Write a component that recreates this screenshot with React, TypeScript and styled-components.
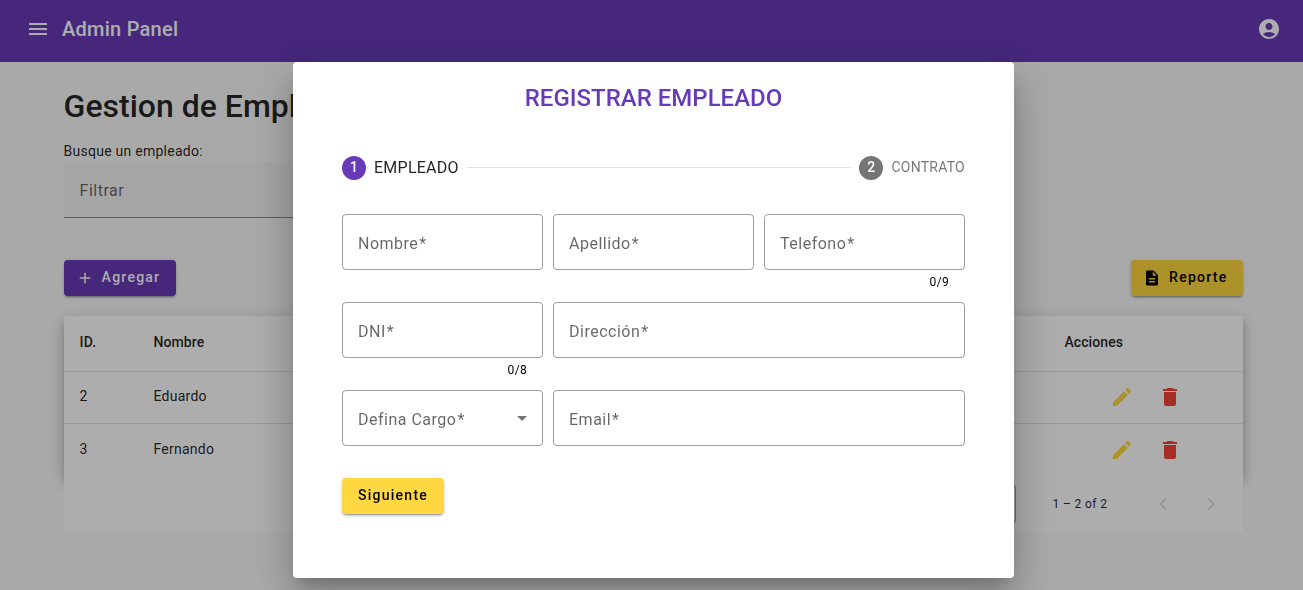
import React from "react";
import styled, { createGlobalStyle } from "styled-components";
import {
  MdMenu,
  MdAccountCircle,
  MdAdd,
  MdDescription,
  MdEdit,
  MdDelete,
  MdChevronLeft,
  MdChevronRight,
} from "react-icons/md";

const GlobalStyle = createGlobalStyle`
  * { box-sizing: border-box; }
  html, body { margin: 0; height: 100%; overflow: hidden; }
  body {
    background: #fafafa;
    color: rgba(0, 0, 0, 0.87);
    font-family: Roboto, "Liberation Sans", sans-serif;
    font-size: 14px;
  }
  svg { display: block; flex: none; }
`;

const Toolbar = styled.header`
  display: flex;
  align-items: center;
  justify-content: space-between;
  height: 62px;
  padding: 0 22px 4px 26px;
  background: #673ab7;
  color: #fff;
`;

const Brand = styled.div`
  display: flex;
  align-items: center;
  gap: 12px;
  font-size: 20px;
  font-weight: 500;
  line-height: 32px;
  letter-spacing: 0.25px;
`;

const Page = styled.main`
  display: flex;
  flex-direction: column;
  padding: 24px 59.6px 0 63.6px;
`;

const Heading = styled.h1`
  margin: 0;
  font-size: 32px;
  font-weight: 500;
  line-height: 40px;
  white-space: nowrap;
`;

const FilterLabel = styled.label`
  margin-top: 15px;
  line-height: 20px;
  letter-spacing: 0.25px;
`;

const FilterField = styled.div`
  display: flex;
  align-items: center;
  width: 500px;
  height: 56px;
  margin-top: 1px;
  padding: 2px 16px 0;
  border-radius: 4px 4px 0 0;
  border-bottom: 1px solid rgba(0, 0, 0, 0.42);
  background: #f5f5f5;
  color: rgba(0, 0, 0, 0.6);
  font-size: 16px;
  letter-spacing: 0.5px;
`;

const Actions = styled.div`
  display: flex;
  justify-content: space-between;
  margin-top: 42px;
`;

const Button = styled.button<{ $tone: "primary" | "accent"; $icon?: boolean }>`
  display: inline-flex;
  align-items: center;
  gap: 8px;
  height: 36px;
  padding: 0 16px 0 ${(p) => (p.$icon ? 12 : 16)}px;
  border: 0;
  border-radius: 4px;
  background: ${(p) => (p.$tone === "primary" ? "#673ab7" : "#ffd740")};
  color: ${(p) => (p.$tone === "primary" ? "#fff" : "#000")};
  font: 500 14px/34px Roboto, "Liberation Sans", sans-serif;
  letter-spacing: 1.25px;
  box-shadow: 0 3px 1px -2px rgba(0, 0, 0, 0.2), 0 2px 2px 0 rgba(0, 0, 0, 0.14),
    0 1px 5px 0 rgba(0, 0, 0, 0.12);
`;

const ButtonText = styled.span`
  padding-bottom: 2px;
`;

const TableCard = styled.section`
  margin-top: 20px;
  background: #fff;
  box-shadow: 0 5px 5px -3px rgba(0, 0, 0, 0.2), 0 8px 10px 1px rgba(0, 0, 0, 0.14),
    0 3px 14px 2px rgba(0, 0, 0, 0.12);
`;

const Row = styled.div<{ $head?: boolean; $last?: boolean }>`
  display: grid;
  grid-template-columns: 73.9px 1fr 179px;
  align-items: center;
  height: ${(p) => (p.$head ? 56 : 52)}px;
  padding: 0 0 ${(p) => (p.$head ? 3 : p.$last ? 2 : 4)}px 16px;
  border-bottom: ${(p) => (p.$last ? "0" : "1px solid rgba(0, 0, 0, 0.12)")};
  font-weight: ${(p) => (p.$head ? 500 : 400)};
  letter-spacing: ${(p) => (p.$head ? 0.1 : 0.25)}px;
`;

const RowActions = styled.div`
  display: flex;
  gap: 24px;
  padding: 2px 0 0 45.6px;
`;

const Paginator = styled.footer`
  position: relative;
  display: flex;
  align-items: center;
  justify-content: flex-end;
  height: 56px;
  padding-right: 8px;
  background: #fff;
  color: rgba(0, 0, 0, 0.87);
  font-size: 12px;
  letter-spacing: 0.4px;
`;

const PageSize = styled.div`
  width: 84px;
  height: 40px;
  padding: 12px 16px;
  border: 1px solid rgba(0, 0, 0, 0.38);
  border-radius: 4px;
`;

const Range = styled.div`
  width: 55px;
  margin: 0 32px 0 36px;
  white-space: nowrap;
`;

const PageButton = styled.button`
  display: grid;
  place-items: center;
  width: 48px;
  height: 48px;
  padding: 0;
  border: 0;
  background: none;
  color: rgba(0, 0, 0, 0.12);
`;

const Backdrop = styled.div`
  position: fixed;
  inset: 0;
  display: flex;
  justify-content: center;
  align-items: flex-start;
  padding: 62px 0 0 4px;
  background: rgba(0, 0, 0, 0.32);
`;

const Dialog = styled.section`
  width: 721px;
  height: 516px;
  padding: 20px 49px 0;
  border-radius: 4px;
  background: #fff;
  box-shadow: 0 11px 15px -7px rgba(0, 0, 0, 0.2), 0 24px 38px 3px rgba(0, 0, 0, 0.14),
    0 9px 46px 8px rgba(0, 0, 0, 0.12);
`;

const DialogTitle = styled.h2`
  margin: 0;
  color: #673ab7;
  font-size: 24px;
  font-weight: 500;
  line-height: 32px;
  text-align: center;
`;

const Stepper = styled.div`
  display: flex;
  align-items: center;
  gap: 8px;
  height: 24px;
  margin-top: 42px;
`;

const Step = styled.div<{ $active?: boolean }>`
  display: flex;
  align-items: center;
  gap: 8px;
  color: ${(p) => (p.$active ? "rgba(0, 0, 0, 0.87)" : "rgba(0, 0, 0, 0.54)")};
  font-size: ${(p) => (p.$active ? 16 : 14)}px;
  line-height: 22px;
  letter-spacing: 0.25px;
`;

const StepLabel = styled.span<{ $active?: boolean }>`
  padding-bottom: ${(p) => (p.$active ? 0 : 2)}px;
`;

const StepNumber = styled.span<{ $active?: boolean }>`
  display: grid;
  place-items: center;
  width: 24px;
  height: 24px;
  padding-bottom: 2px;
  border-radius: 50%;
  background: ${(p) => (p.$active ? "#673ab7" : "#757575")};
  color: #fff;
  font-size: 14px;
  font-weight: 500;
`;

const StepLine = styled.div`
  flex: 1;
  height: 1px;
  margin-bottom: 1px;
  background: rgba(0, 0, 0, 0.12);
`;

const Form = styled.form`
  display: grid;
  grid-template-columns: repeat(3, 1fr);
  grid-auto-rows: 88px;
  column-gap: 10px;
  margin-top: 34px;
`;

const Field = styled.div<{ $wide?: boolean }>`
  grid-column: span ${(p) => (p.$wide ? 2 : 1)};
`;

const FieldBox = styled.div`
  display: flex;
  align-items: center;
  justify-content: space-between;
  height: 56px;
  padding: 2px 15px 0;
  border: 1px solid rgba(0, 0, 0, 0.38);
  border-radius: 4px;
  color: rgba(0, 0, 0, 0.6);
  font-size: 16px;
  letter-spacing: 0.5px;
`;

const Required = styled.span`
  margin-left: 1px;
`;

const Counter = styled.div`
  padding: 2px 15.8px 0;
  color: #000;
  font-size: 12px;
  line-height: 20px;
  letter-spacing: 0.4px;
  text-align: right;
`;

const Caret = styled.span`
  margin: -2px 0 0;
  border: 5px solid transparent;
  border-top-color: rgba(0, 0, 0, 0.54);
  border-bottom: 0;
`;

const employees = [
  { id: 2, name: "Eduardo" },
  { id: 3, name: "Fernando" },
];

type FieldSpec = { label: string; wide?: boolean; max?: number; select?: boolean };

const fields: FieldSpec[] = [
  { label: "Nombre" },
  { label: "Apellido" },
  { label: "Telefono", max: 9 },
  { label: "DNI", max: 8 },
  { label: "Dirección", wide: true },
  { label: "Defina Cargo", select: true },
  { label: "Email", wide: true },
];

export default function App() {
  return (
    <>
      <GlobalStyle />
      <Toolbar>
        <Brand>
          <MdMenu size={24} />
          Admin Panel
        </Brand>
        <MdAccountCircle size={24} />
      </Toolbar>

      <Page>
        <Heading>Gestion de Empleados</Heading>
        <FilterLabel>Busque un empleado:</FilterLabel>
        <FilterField>Filtrar</FilterField>
        <Actions>
          <Button $tone="primary" $icon>
            <MdAdd size={18} />
            <ButtonText>Agregar</ButtonText>
          </Button>
          <Button $tone="accent" $icon>
            <MdDescription size={18} />
            <ButtonText>Reporte</ButtonText>
          </Button>
        </Actions>
        <TableCard>
          <Row $head>
            <span>ID.</span>
            <span>Nombre</span>
            <span>Acciones</span>
          </Row>
          {employees.map((e, i) => (
            <Row key={e.id} $last={i === employees.length - 1}>
              <span>{e.id}</span>
              <span>{e.name}</span>
              <RowActions>
                <MdEdit size={24} color="#ffd740" />
                <MdDelete size={24} color="#f44336" />
              </RowActions>
            </Row>
          ))}
        </TableCard>
        <Paginator>
          <PageSize>5</PageSize>
          <Range>1 – 2 of 2</Range>
          <PageButton aria-label="Previous page">
            <MdChevronLeft size={24} />
          </PageButton>
          <PageButton aria-label="Next page">
            <MdChevronRight size={24} />
          </PageButton>
        </Paginator>
      </Page>

      <Backdrop>
        <Dialog role="dialog">
          <DialogTitle>REGISTRAR EMPLEADO</DialogTitle>
          <Stepper>
            <Step $active>
              <StepNumber $active>1</StepNumber>
              <StepLabel $active>EMPLEADO</StepLabel>
            </Step>
            <StepLine />
            <Step>
              <StepNumber>2</StepNumber>
              <StepLabel>CONTRATO</StepLabel>
            </Step>
          </Stepper>
          <Form>
            {fields.map((f) => (
              <Field key={f.label} $wide={f.wide}>
                <FieldBox>
                  <span>
                    {f.label}
                    <Required>*</Required>
                  </span>
                  {f.select && <Caret />}
                </FieldBox>
                {f.max && <Counter>0/{f.max}</Counter>}
              </Field>
            ))}
          </Form>
          <Button $tone="accent">
            <ButtonText>Siguiente</ButtonText>
          </Button>
        </Dialog>
      </Backdrop>
    </>
  );
}
